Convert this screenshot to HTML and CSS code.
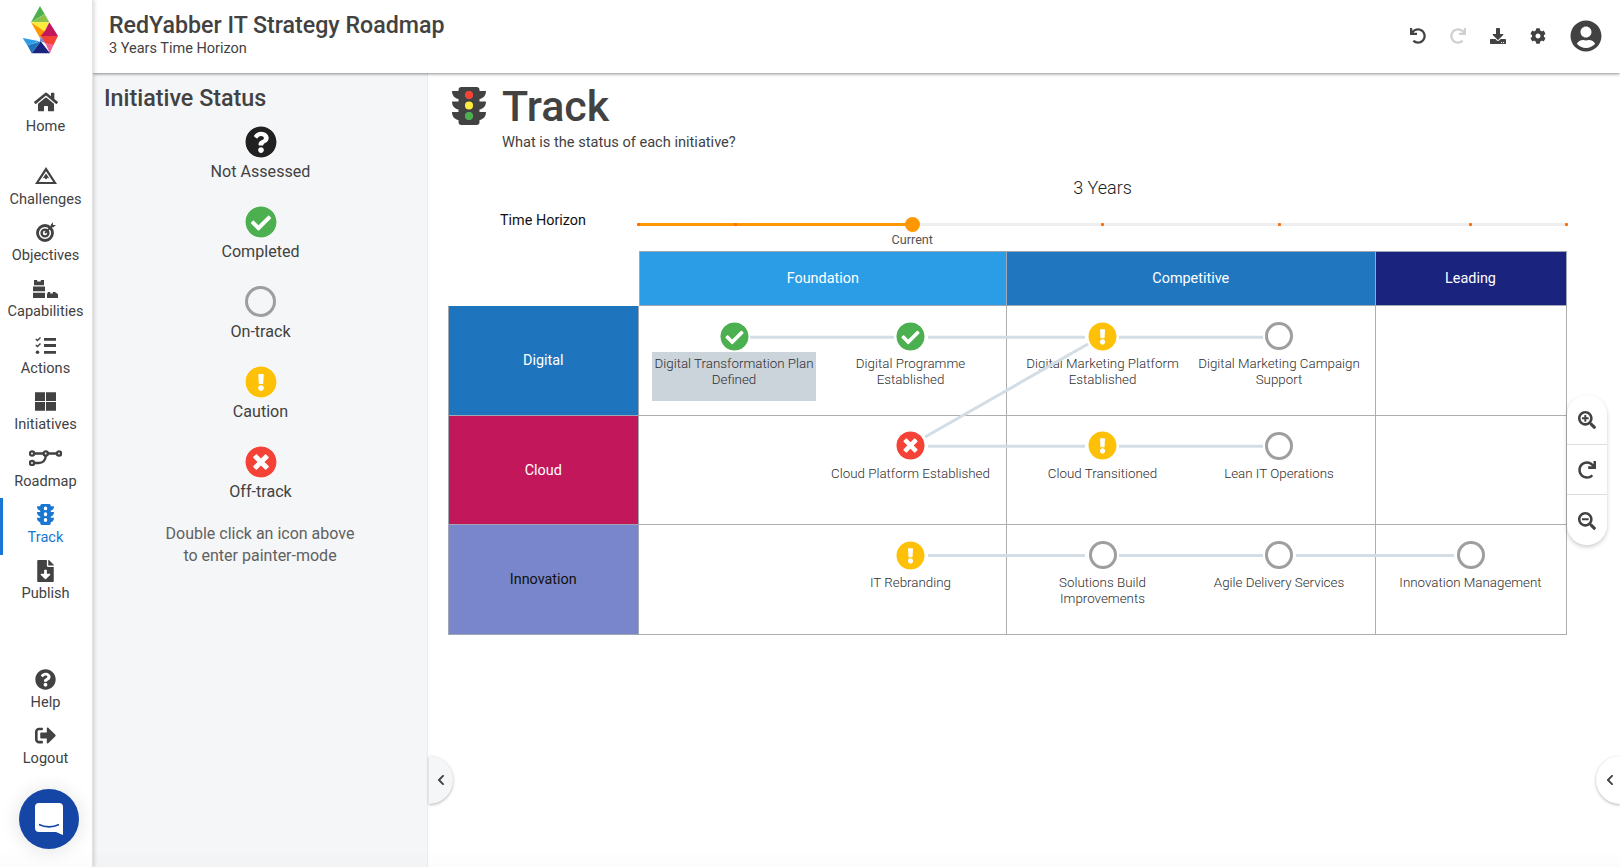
FILE: index.html
```html
<!DOCTYPE html>
<html lang="en">
<head>
  <meta charset="UTF-8">
  <title>RedYabber IT Strategy Roadmap - Track</title>
  <meta name="viewport" content="width=device-width, initial-scale=1.0">
  <link rel="stylesheet" href="styles.css">
</head>
<body>

<svg class="icon-defs" aria-hidden="true">
  <symbol id="i-home" viewBox="0 0 576 512"><path d="M280.37 148.26L96 300.11V464a16 16 0 0 0 16 16l112.06-.29a16 16 0 0 0 15.92-16V368a16 16 0 0 1 16-16h64a16 16 0 0 1 16 16v95.64a16 16 0 0 0 16 16.05L464 480a16 16 0 0 0 16-16V300L295.67 148.26a12.19 12.19 0 0 0-15.3 0zM571.6 251.47L488 182.56V44.05a12 12 0 0 0-12-12h-56a12 12 0 0 0-12 12v72.61L318.47 43a48 48 0 0 0-61 0L4.34 251.47a12 12 0 0 0-1.6 16.9l25.5 31A12 12 0 0 0 45.15 301l235.22-193.74a12.19 12.19 0 0 1 15.3 0L530.9 301a12 12 0 0 0 16.9-1.6l25.5-31a12 12 0 0 0-1.7-16.93z"/></symbol>
  <symbol id="i-mountain" viewBox="0 0 22 17"><path fill-rule="evenodd" d="M11 0L22 17H0zM11 4.200L3.800 15H18.200z"/><path d="M7.600 11.600L11 6.600l3.400 5-1.600-.9-1.800 1.700-1.800-1.700z"/></symbol>
  <symbol id="i-target" viewBox="0 0 20 20"><circle cx="9" cy="11" r="7.500" fill="none" stroke="currentColor" stroke-width="2.800"/><circle cx="9" cy="11" r="3.400" fill="none" stroke="currentColor" stroke-width="2.400"/><path d="M9 11L16.500 3.500" fill="none" stroke="currentColor" stroke-width="1.800"/><path d="M14.800 2.800L17 .3V3H20L17.400 5.200H14.800z"/></symbol>
  <symbol id="i-blocks" viewBox="0 0 25 18"><path d="M1 0h3.200v1.500h3.600V0H11v5.200H1zM0 6.600h12v4.700H0zM0 12.700h12V18H0zM15 12h2.200v1.500h2.600V12H22l3 2.200V18H14v-3.800z"/></symbol>
  <symbol id="i-tasks" viewBox="0 0 21 17"><path d="M9 1h12v2.800H9zM9 7.100h12v2.800H9zM9 14h12v2.800H9z"/><path d="M.3 2.400L1.300 1.500 2.500 2.600 5 0l1 1-3.500 3.600zM.3 8.400L1.300 7.500 2.500 8.600 5 6l1 1-3.500 3.600z"/><circle cx="2.500" cy="15.200" r="1.800"/></symbol>
  <symbol id="i-grid" viewBox="0 0 21 18.500"><path d="M0 0h10v8.800H0zM11 0h10v8.800H11zM0 9.800h10v8.700H0zM11 9.800h10v8.700H11z"/></symbol>
  <symbol id="i-route" viewBox="0 0 33 16"><g fill="none" stroke="currentColor" stroke-width="2.400"><circle cx="3" cy="3.500" r="2.100"/><circle cx="16.700" cy="3.500" r="2.100"/><circle cx="30" cy="3.500" r="2.100"/><circle cx="3" cy="13" r="2.100"/><path d="M5.200 3.500h9.300M18.900 3.500h8.900M16.700 5.700c0 5-3 7.300-7 7.300H5.200"/></g></symbol>
  <symbol id="i-light" viewBox="0 0 34 38" preserveAspectRatio="none"><path fill-rule="evenodd" d="M9.500 0h15a3 3 0 0 1 3 3v1h6.500c0 4.500-2.500 7.300-6.500 8v2.500h6.500c0 4.500-2.500 7.300-6.500 8V25h6.500c0 4.500-2.500 7.300-6.500 8v2a3 3 0 0 1-3 3h-15a3 3 0 0 1-3-3v-2C2.500 32.300 0 29.500 0 25h6.500v-2.500C2.500 21.800 0 19 0 14.500h6.500V12C2.500 11.300 0 8.500 0 4h6.500V3a3 3 0 0 1 3-3zM17 4.500a3.500 3.500 0 1 0 0 7 3.500 3.500 0 0 0 0-7zM17 15a3.500 3.500 0 1 0 0 7 3.500 3.500 0 0 0 0-7zM17 25.500a3.500 3.500 0 1 0 0 7 3.500 3.500 0 0 0 0-7z"/></symbol>
  <symbol id="i-publish" viewBox="0 0 384 512"><path d="M224 136V0H24C10.700 0 0 10.700 0 24v464c0 13.300 10.700 24 24 24h336c13.300 0 24-10.700 24-24V160H248c-13.200 0-24-10.800-24-24zm76.450 211.360l-96.420 95.700c-6.650 6.610-17.390 6.610-24.040 0l-96.420-95.700C73.420 337.290 80.540 320 94.820 320H160v-80c0-8.840 7.160-16 16-16h32c8.840 0 16 7.160 16 16v80h65.180c14.280 0 21.400 17.290 11.270 27.360zM377 105L279.100 7c-4.500-4.500-10.600-7-17-7H256v128h128v-6.100c0-6.300-2.500-12.400-7-16.900z"/></symbol>
  <symbol id="i-question" viewBox="0 0 512 512"><path d="M504 256c0 136.997-111.043 248-248 248S8 392.997 8 256C8 119.083 119.043 8 256 8s248 111.083 248 248zM262.655 90c-54.497 0-89.255 22.957-116.549 63.758-3.536 5.286-2.353 12.415 2.715 16.258l34.699 26.310c5.205 3.947 12.621 3.008 16.665-2.122 17.864-22.658 30.113-35.797 57.303-35.797 20.429 0 45.698 13.148 45.698 32.958 0 14.976-12.363 22.667-32.534 33.976C247.128 238.528 216 254.941 216 296v4c0 6.627 5.373 12 12 12h56c6.627 0 12-5.373 12-12v-1.333c0-28.462 83.186-29.647 83.186-106.667 0-58.002-60.165-102-116.531-102zM256 338c-25.365 0-46 20.635-46 46 0 25.364 20.635 46 46 46s46-20.636 46-46c0-25.365-20.635-46-46-46z"/></symbol>
  <symbol id="i-check" viewBox="0 0 512 512"><path d="M504 256c0 136.967-111.033 248-248 248S8 392.967 8 256 119.033 8 256 8s248 111.033 248 248zM227.314 387.314l184-184c6.248-6.248 6.248-16.379 0-22.627l-22.627-22.627c-6.248-6.249-16.379-6.249-22.628 0L216 308.118l-70.059-70.059c-6.248-6.248-16.379-6.248-22.628 0l-22.627 22.627c-6.248 6.248-6.248 16.379 0 22.627l104 104c6.249 6.249 16.379 6.249 22.628.001z"/></symbol>
  <symbol id="i-caution" viewBox="0 0 512 512"><path d="M504 256c0 136.997-111.043 248-248 248S8 392.997 8 256C8 119.083 119.043 8 256 8s248 111.083 248 248zm-248 50c-25.405 0-46 20.595-46 46s20.595 46 46 46 46-20.595 46-46-20.595-46-46-46zm-43.673-165.346l7.418 136c.347 6.364 5.609 11.346 11.982 11.346h48.546c6.373 0 11.635-4.982 11.982-11.346l7.418-136c.375-6.874-5.098-12.654-11.982-12.654h-63.383c-6.884 0-12.356 5.780-11.981 12.654z"/></symbol>
  <symbol id="i-cross" viewBox="0 0 512 512"><path d="M256 8C119 8 8 119 8 256s111 248 248 248 248-111 248-248S393 8 256 8zm121.600 313.100c4.700 4.700 4.700 12.300 0 17L338 377.600c-4.700 4.700-12.300 4.700-17 0L256 312l-65.100 65.600c-4.700 4.700-12.300 4.700-17 0L134.400 338c-4.700-4.700-4.700-12.300 0-17l65.600-65-65.600-65.100c-4.700-4.700-4.700-12.300 0-17l39.600-39.600c4.700-4.700 12.300-4.700 17 0l65 65.700 65.100-65.600c4.700-4.700 12.300-4.700 17 0l39.600 39.600c4.700 4.700 4.700 12.300 0 17L312 256l65.600 65.100z"/></symbol>
  <symbol id="i-logout" viewBox="0 0 512 512"><path d="M497 273L329 441c-15 15-41 4.500-41-17v-96H152c-13.300 0-24-10.700-24-24v-96c0-13.300 10.700-24 24-24h136V88c0-21.400 25.900-32 41-17l168 168c9.300 9.400 9.300 24.600 0 34zM192 436v-40c0-6.600-5.400-12-12-12H96c-17.700 0-32-14.300-32-32V160c0-17.700 14.300-32 32-32h84c6.600 0 12-5.400 12-12V76c0-6.600-5.400-12-12-12H96c-53 0-96 43-96 96v192c0 53 43 96 96 96h84c6.600 0 12-5.400 12-12z"/></symbol>
  <symbol id="i-undo" viewBox="0 0 512 512"><path d="M212.333 224.333H12c-6.627 0-12-5.373-12-12V12C0 5.373 5.373 0 12 0h48c6.627 0 12 5.373 12 12v78.112C117.773 39.279 184.260 7.470 258.175 8.007c136.906.994 246.448 111.623 246.157 248.532C504.041 393.258 393.120 504 256.333 504c-64.089 0-122.496-24.313-166.510-64.215-5.099-4.622-5.334-12.554-.467-17.420l33.967-33.967c4.474-4.474 11.662-4.717 16.401-.525C170.760 415.336 211.580 432 256.333 432c97.268 0 176-78.716 176-176 0-97.267-78.716-176-176-176-58.496 0-110.280 28.476-142.274 72.333h98.274c6.627 0 12 5.373 12 12v48c0 6.627-5.373 12-12 12z"/></symbol>
  <symbol id="i-download" viewBox="0 0 512 512"><path d="M216 0h80c13.300 0 24 10.700 24 24v168h87.700c17.800 0 26.700 21.500 14.100 34.100L269.700 378.300c-7.500 7.500-19.800 7.500-27.300 0L90.100 226.100c-12.600-12.600-3.700-34.100 14.100-34.100H192V24c0-13.300 10.700-24 24-24zm296 376v112c0 13.300-10.700 24-24 24H24c-13.300 0-24-10.700-24-24V376c0-13.300 10.700-24 24-24h146.700l49 49c20.100 20.100 52.500 20.100 72.600 0l49-49H488c13.300 0 24 10.700 24 24zm-124 88c0-11-9-20-20-20s-20 9-20 20 9 20 20 20 20-9 20-20zm64 0c0-11-9-20-20-20s-20 9-20 20 9 20 20 20 20-9 20-20z"/></symbol>
  <symbol id="i-cog" viewBox="0 0 512 512"><path d="M487.400 315.700l-42.600-24.600c4.300-23.200 4.300-47 0-70.200l42.600-24.600c4.900-2.800 7.100-8.600 5.500-14-11.100-35.600-30-67.800-54.700-94.600-3.800-4.100-10-5.100-14.800-2.300L380.800 110c-17.900-15.400-38.500-27.300-60.800-35.100V25.800c0-5.600-3.900-10.500-9.400-11.700-36.700-8.200-74.300-7.800-109.200 0-5.500 1.200-9.400 6.100-9.400 11.700V75c-22.200 7.900-42.800 19.800-60.800 35.100L88.700 85.500c-4.900-2.800-11-1.900-14.800 2.300-24.700 26.700-43.600 58.900-54.700 94.600-1.700 5.400.6 11.200 5.500 14L67.300 221c-4.300 23.200-4.300 47 0 70.200l-42.600 24.600c-4.900 2.800-7.100 8.600-5.500 14 11.100 35.600 30 67.800 54.700 94.600 3.800 4.100 10 5.100 14.800 2.300l42.600-24.600c17.900 15.400 38.500 27.300 60.800 35.100v49.200c0 5.600 3.900 10.500 9.400 11.700 36.700 8.200 74.300 7.800 109.200 0 5.500-1.200 9.400-6.100 9.400-11.700v-49.200c22.200-7.900 42.800-19.800 60.800-35.100l42.600 24.600c4.900 2.800 11 1.900 14.800-2.300 24.700-26.700 43.600-58.900 54.700-94.600 1.500-5.500-.7-11.300-5.600-14.100zM256 336c-44.100 0-80-35.900-80-80s35.900-80 80-80 80 35.900 80 80-35.900 80-80 80z"/></symbol>
  <symbol id="i-user" viewBox="0 0 496 512"><path d="M248 8C111 8 0 119 0 256s111 248 248 248 248-111 248-248S385 8 248 8zm0 96c48.600 0 88 39.400 88 88s-39.400 88-88 88-88-39.400-88-88 39.400-88 88-88zm0 344c-58.700 0-111.300-26.600-146.500-68.200 18.800-35.400 55.600-59.800 98.500-59.800 2.400 0 4.800.4 7.100 1.100 13 4.200 26.600 6.900 40.900 6.900 14.300 0 28-2.700 40.900-6.900 2.300-.7 4.700-1.100 7.100-1.100 42.900 0 79.700 24.400 98.500 59.800C359.300 421.400 306.700 448 248 448z"/></symbol>
  <symbol id="i-zoom-in" viewBox="0 0 512 512"><path d="M304 192v32c0 6.600-5.400 12-12 12h-56v56c0 6.600-5.400 12-12 12h-32c-6.600 0-12-5.400-12-12v-56h-56c-6.600 0-12-5.400-12-12v-32c0-6.600 5.400-12 12-12h56v-56c0-6.600 5.400-12 12-12h32c6.600 0 12 5.400 12 12v56h56c6.600 0 12 5.400 12 12zm201 284.700L476.700 505c-9.400 9.400-24.600 9.400-33.900 0L343 405.300c-4.500-4.500-7-10.600-7-17V372c-35.300 27.600-79.700 44-128 44C93.100 416 0 322.900 0 208S93.100 0 208 0s208 93.100 208 208c0 48.300-16.400 92.700-44 128h16.300c6.400 0 12.500 2.500 17 7l99.700 99.700c9.300 9.400 9.300 24.600 0 34zM344 208c0-75.200-60.800-136-136-136S72 132.800 72 208s60.800 136 136 136 136-60.800 136-136z"/></symbol>
  <symbol id="i-zoom-out" viewBox="0 0 512 512"><path d="M304 192v32c0 6.600-5.400 12-12 12H124c-6.600 0-12-5.400-12-12v-32c0-6.600 5.400-12 12-12h168c6.600 0 12 5.400 12 12zm201 284.700L476.700 505c-9.400 9.400-24.600 9.400-33.900 0L343 405.300c-4.500-4.500-7-10.600-7-17V372c-35.300 27.600-79.700 44-128 44C93.100 416 0 322.900 0 208S93.100 0 208 0s208 93.100 208 208c0 48.300-16.400 92.700-44 128h16.300c6.400 0 12.500 2.500 17 7l99.700 99.700c9.300 9.400 9.300 24.600 0 34zM344 208c0-75.200-60.800-136-136-136S72 132.800 72 208s60.800 136 136 136 136-60.800 136-136z"/></symbol>
  <symbol id="i-chevron" viewBox="0 0 320 512"><path d="M34.520 239.030L228.870 44.690c9.370-9.370 24.570-9.370 33.940 0l22.670 22.670c9.360 9.360 9.370 24.520.04 33.900L131.490 256l154.020 154.750c9.340 9.380 9.320 24.540-.04 33.900l-22.670 22.670c-9.370 9.370-24.570 9.370-33.940 0L34.520 272.970c-9.370-9.370-9.370-24.570 0-33.940z"/></symbol>
</svg>

<aside class="sidebar">
  <div class="logo">
    <svg width="40" height="54" viewBox="60 10 120 160">
      <polygon fill="#4caf50" points="120,18 93,67 134,42"/>
      <polygon fill="#8bc34a" points="134,42 148,67 93,67"/>
      <polygon fill="#ff9800" points="93,67 136,92 120,115"/>
      <polygon fill="#ffeb3b" points="93,67 148,67 133,94"/>
      <polygon fill="#c2185b" points="148,67 174,108 122,108 135,92"/>
      <polygon fill="#f44336" points="122,108 174,108 160,136 135,130"/>
      <polygon fill="#f06292" points="135,128 160,136 150,160"/>
      <polygon fill="#7986cb" points="122,108 135,128 120,124"/>
      <polygon fill="#1a237e" points="122,124 150,160 95,160"/>
      <polygon fill="#1f75bd" points="122,124 95,160 82,136"/>
      <polygon fill="#2b9ce6" points="68,114 118,124 82,136"/>
    </svg>
  </div>
  <nav class="nav">
    <a class="nav-item nav-home"><span class="nav-icon"><svg width="24" height="22"><use href="#i-home"/></svg></span>Home</a>
    <a class="nav-item"><span class="nav-icon"><svg width="22" height="17"><use href="#i-mountain"/></svg></span>Challenges</a>
    <a class="nav-item"><span class="nav-icon"><svg width="20" height="20"><use href="#i-target"/></svg></span>Objectives</a>
    <a class="nav-item"><span class="nav-icon"><svg width="25" height="18"><use href="#i-blocks"/></svg></span>Capabilities</a>
    <a class="nav-item"><span class="nav-icon"><svg width="21" height="17"><use href="#i-tasks"/></svg></span>Actions</a>
    <a class="nav-item"><span class="nav-icon"><svg width="21" height="19"><use href="#i-grid"/></svg></span>Initiatives</a>
    <a class="nav-item"><span class="nav-icon"><svg width="33" height="16"><use href="#i-route"/></svg></span>Roadmap</a>
    <a class="nav-item active"><span class="nav-icon"><svg width="17" height="21"><use href="#i-light"/></svg></span>Track</a>
    <a class="nav-item"><span class="nav-icon"><svg width="17" height="22"><use href="#i-publish"/></svg></span>Publish</a>
  </nav>
  <nav class="nav nav-bottom">
    <a class="nav-item"><span class="nav-icon"><svg width="21" height="21"><use href="#i-question"/></svg></span>Help</a>
    <a class="nav-item"><span class="nav-icon"><svg width="21" height="21"><use href="#i-logout"/></svg></span>Logout</a>
  </nav>
</aside>

<div class="content">
  <header class="topbar">
    <div>
      <h1 class="plan-title">RedYabber IT Strategy Roadmap</h1>
      <div class="plan-sub">3 Years Time Horizon</div>
    </div>
    <div class="tools">
      <svg class="tool" width="16" height="16"><use href="#i-undo"/></svg>
      <svg class="tool tool-redo" width="16" height="16"><use href="#i-undo"/></svg>
      <svg class="tool" width="16" height="16"><use href="#i-download"/></svg>
      <svg class="tool" width="16" height="16"><use href="#i-cog"/></svg>
      <svg class="avatar" width="32" height="32"><use href="#i-user"/></svg>
    </div>
  </header>

  <div class="workspace">
    <section class="panel">
      <h2 class="panel-title">Initiative Status</h2>
      <div class="status-list">
        <div class="status"><svg class="status-icon dark" width="32" height="32"><use href="#i-question"/></svg>Not Assessed</div>
        <div class="status"><svg class="status-icon green" width="32" height="32"><use href="#i-check"/></svg>Completed</div>
        <div class="status"><span class="ring ring-big"></span>On-track</div>
        <div class="status"><svg class="status-icon amber" width="32" height="32"><use href="#i-caution"/></svg>Caution</div>
        <div class="status"><svg class="status-icon red" width="32" height="32"><use href="#i-cross"/></svg>Off-track</div>
      </div>
      <p class="panel-help">Double click an icon above<br>to enter painter-mode</p>
    </section>

    <main class="main">
      <div class="page-head">
        <svg class="page-icon" width="34" height="38" viewBox="0 0 34 38">
          <use href="#i-light"/>
          <circle cx="17" cy="8" r="4" fill="#f44336"/>
          <circle cx="17" cy="18.500" r="4" fill="#ffeb3b"/>
          <circle cx="17" cy="29" r="4" fill="#4caf50"/>
        </svg>
        <div>
          <h1 class="page-title">Track</h1>
          <p class="page-sub">What is the status of each initiative?</p>
        </div>
      </div>

      <div class="horizon-title">3 Years</div>
      <div class="horizon">
        <div class="horizon-label">Time Horizon</div>
        <div class="slider">
          <div class="slider-fill"></div>
          <i class="tick" style="left: 0"></i>
          <i class="tick" style="left: 10.4%"></i>
          <i class="tick" style="left: 50%"></i>
          <i class="tick" style="left: 69.1%"></i>
          <i class="tick" style="left: 89.7%"></i>
          <i class="tick" style="left: 100%"></i>
          <div class="thumb"><span>Current</span></div>
        </div>
      </div>

      <div class="board">
        <div class="corner"></div>
        <div class="col-head foundation">Foundation</div>
        <div class="col-head competitive">Competitive</div>
        <div class="col-head leading">Leading</div>

        <div class="row-head digital">Digital</div>
        <div class="cell">
          <div class="node selected"><svg class="node-icon green" width="29" height="29"><use href="#i-check"/></svg><div class="node-label">Digital Transformation Plan Defined</div></div>
          <div class="node"><svg class="node-icon green" width="29" height="29"><use href="#i-check"/></svg><div class="node-label">Digital Programme Established</div></div>
        </div>
        <div class="cell">
          <div class="node"><svg class="node-icon amber" width="29" height="29"><use href="#i-caution"/></svg><div class="node-label">Digital Marketing Platform Established</div></div>
          <div class="node"><span class="ring"></span><div class="node-label">Digital Marketing Campaign Support</div></div>
        </div>
        <div class="cell"></div>

        <div class="row-head cloud">Cloud</div>
        <div class="cell">
          <div class="node"></div>
          <div class="node"><svg class="node-icon red" width="29" height="29"><use href="#i-cross"/></svg><div class="node-label">Cloud Platform Established</div></div>
        </div>
        <div class="cell">
          <div class="node"><svg class="node-icon amber" width="29" height="29"><use href="#i-caution"/></svg><div class="node-label">Cloud Transitioned</div></div>
          <div class="node"><span class="ring"></span><div class="node-label">Lean IT Operations</div></div>
        </div>
        <div class="cell"></div>

        <div class="row-head innovation">Innovation</div>
        <div class="cell">
          <div class="node"></div>
          <div class="node"><svg class="node-icon amber" width="29" height="29"><use href="#i-caution"/></svg><div class="node-label">IT Rebranding</div></div>
        </div>
        <div class="cell">
          <div class="node"><span class="ring"></span><div class="node-label">Solutions Build Improvements</div></div>
          <div class="node"><span class="ring"></span><div class="node-label">Agile Delivery Services</div></div>
        </div>
        <div class="cell">
          <div class="node"><span class="ring"></span><div class="node-label">Innovation Management</div></div>
        </div>

        <!-- connectors, in board coordinates -->
        <svg class="links" width="1118" height="384">
          <path d="M302 86.300H446M480 86.300H637M671 86.300H815"/>
          <path d="M477 186L640 93"/>
          <path d="M480 195.300H637M671 195.300H815"/>
          <path d="M480 304.500H637M671 304.500H815M848 304.500H1006"/>
        </svg>
      </div>

      <div class="zoom-bar">
        <div class="zoom-btn"><svg width="18" height="18"><use href="#i-zoom-in"/></svg></div>
        <div class="zoom-btn"><svg class="flip" width="18" height="18"><use href="#i-undo"/></svg></div>
        <div class="zoom-btn"><svg width="18" height="18"><use href="#i-zoom-out"/></svg></div>
      </div>

      <div class="tab tab-left"><svg width="8" height="12"><use href="#i-chevron"/></svg></div>
      <div class="tab tab-right"><svg width="8" height="12"><use href="#i-chevron"/></svg></div>
    </main>
  </div>
</div>

<div class="chat">
  <svg width="28" height="32" viewBox="0 0 28 32">
    <path fill="#fff" d="M4 0h20a4 4 0 0 1 4 4v28l-7-3H4a4 4 0 0 1-4-4V4a4 4 0 0 1 4-4z"/>
    <path fill="none" stroke="#1546a6" stroke-width="1.600" d="M4 21.500c6 3.200 14 3.200 20 0"/>
  </svg>
</div>
<div class="page-fade"></div>

</body>
</html>
```

FILE: styles.css
```css
:root {
  --ink: #424242;
  --blue: #1976d2;
  --panel-bg: #f5f6f8;
  --grid-line: #aeaeae;
}

* {
  box-sizing: border-box;
}

html, body {
  height: 100%;
}

body {
  margin: 0;
  display: flex;
  overflow: hidden;
  background: #fff;
  color: var(--ink);
  font-family: Roboto, 'Liberation Sans', sans-serif;
  font-size: 14px;
}

h1, h2, p {
  margin: 0;
}

.icon-defs {
  position: absolute;
  width: 0;
  height: 0;
}

svg {
  fill: currentColor;
  display: block;
}

/* left nav */
.sidebar {
  flex: 0 0 93px;
  width: 93px;
  border-right: 1px solid #e4e4e4;
  box-shadow: 1px 0 4px rgba(0,0,0,0.18);
  background: #fff;
  position: relative;
  z-index: 3;
}

.logo {
  height: 86px;
  padding: 3px 0 0 20px;
}

.nav-item {
  display: block;
  height: 56.4px;
  padding-top: 4px;
  border-left: 3px solid transparent;
  padding-right: 4px;
  text-align: center;
  font-size: 14.6px;
  line-height: 20px;
}

.nav-item.active {
  border-left-color: var(--blue);
  color: var(--blue);
}

.nav-home {
  margin-bottom: 17.6px;
}

.nav-home .nav-icon {
  margin-bottom: 1.5px;
}

.nav-icon {
  height: 24px;
  margin-bottom: 0.7px;
  display: flex;
  align-items: center;
  justify-content: center;
}

.nav-bottom {
  margin-top: 52px;
}

/* top bar */
.content {
  flex: 1;
  min-width: 0;
  display: flex;
  flex-direction: column;
}

.topbar {
  height: 73px;
  flex: none;
  padding: 13px 0 0 16px;
  display: flex;
  justify-content: space-between;
  background: #fff;
  box-shadow: 0 1px 3px rgba(0,0,0,0.45);
  position: relative;
  z-index: 2;
}

.plan-title {
  font-size: 23.2px;
  font-weight: 500;
  line-height: 25px;
}

.plan-sub {
  margin-top: 1px;
  font-size: 14.5px;
  line-height: 20px;
}

.tools {
  display: flex;
  align-items: center;
  height: 46px;
  padding-right: 18px;
}

.tool {
  margin-right: 24px;
}

.tool-redo {
  color: #d0d0d0;
  transform: scaleX(-1);
}

/* status panel */
.workspace {
  flex: 1;
  display: flex;
  min-height: 0;
}

.panel {
  width: 335px;
  flex: none;
  background: var(--panel-bg);
  border-right: 1px solid #ececec;
  padding-top: 11px;
}

.panel-title {
  font-size: 23.3px;
  font-weight: 500;
  line-height: 28px;
  padding-left: 11px;
  margin-bottom: 14px;
}

.status {
  height: 80px;
  display: flex;
  flex-direction: column;
  align-items: center;
  padding-left: 1px;
  font-size: 16.1px;
  line-height: 20px;
}

.status-icon {
  margin-bottom: 4px;
  background: #fff;
  border-radius: 50%;
}

.dark {
  color: #212121;
}

.green {
  color: #4caf50;
}

.amber {
  color: #ffc107;
}

.red {
  color: #f44336;
}

.ring {
  display: block;
  width: 28px;
  height: 28px;
  border: 3px solid #9e9e9e;
  border-radius: 50%;
  background: #fff;
  flex: none;
}

.ring-big {
  width: 31px;
  height: 31px;
  margin-bottom: 5px;
  background: transparent;
}

.panel-help {
  margin-top: -3px;
  text-align: center;
  font-size: 16px;
  line-height: 22px;
  color: #616161;
}

/* main area */
.main {
  flex: 1;
  position: relative;
  padding-left: 20px;
}

.page-head {
  display: flex;
  padding: 14px 0 0 4px;
}

.page-icon {
  margin-right: 16px;
  flex: none;
}

.page-title {
  font-size: 43px;
  font-weight: 500;
  line-height: 39px;
}

.page-sub {
  margin-top: 6px;
  font-size: 14.6px;
  line-height: 20px;
}

.horizon-title {
  margin: 24px 0 0 190.5px;
  width: 928px;
  text-align: center;
  font-size: 18px;
  font-weight: 300;
  line-height: 24px;
  color: #212121;
}

.horizon {
  display: flex;
  align-items: center;
  height: 18px;
  margin-top: 12px;
}

.horizon-label {
  width: 190.5px;
  padding-left: 52px;
  font-size: 14.4px;
  color: #111;
  line-height: 18px;
}

.slider {
  width: 928px;
  height: 3px;
  margin-top: 6px;
  background: #eee;
  position: relative;
}

.slider-fill {
  width: 29.5%;
  height: 100%;
  background: #ff9800;
}

.tick {
  position: absolute;
  top: 0;
  width: 3px;
  height: 3.5px;
  margin-left: -1.5px;
  background: #ff6d00;
  border-radius: 1px;
}

.thumb {
  position: absolute;
  left: 29.5%;
  top: -6px;
  width: 15px;
  height: 15px;
  margin-left: -7.5px;
  border-radius: 50%;
  background: #ff9800;
}

.thumb span {
  position: absolute;
  top: 15px;
  left: 50%;
  transform: translateX(-50%);
  font-size: 12.6px;
  line-height: 16px;
  color: #555;
}

/* the roadmap table */
.board {
  position: relative;
  margin-top: 21px;
  display: grid;
  grid-template-columns: 190.5px 368.5px 368.5px 191px;
  grid-template-rows: 55px repeat(3, 109.7px);
  width: 1118.5px;
}

.col-head, .row-head {
  display: flex;
  align-items: center;
  justify-content: center;
  color: #fff;
  font-size: 14.4px;
  border: 1px solid #9ea7b3;
  border-width: 1px 1px 1px 0;
}

.row-head {
  border-width: 0 1px 1px 1px;
}

.foundation {
  background: #2b9ce6;
  border-left-width: 1px;
}

.competitive {
  background: #2177bf;
}

.leading {
  background: #1a237e;
}

.digital {
  background: #1f75bd;
}

.cloud {
  background: #c2185b;
}

.innovation {
  background: #7986cb;
  color: #111;
}

.cell {
  display: flex;
  justify-content: center;
  gap: 12.5px;
  padding-top: 16px;
  border-right: 1px solid var(--grid-line);
  border-bottom: 1px solid var(--grid-line);
}

.node {
  width: 164px;
  display: flex;
  flex-direction: column;
  align-items: center;
}

.node-icon {
  margin: -0.5px 0 1.5px;
  background: #fff;
  border-radius: 50%;
}

.node .ring {
  margin-bottom: 2px;
}

.node-label {
  width: 164px;
  min-height: 49px;
  padding: 4px 1px 0;
  font-size: 13.35px;
  font-weight: 300;
  line-height: 15.5px;
  text-align: center;
  color: #2e2e2e;
}

.selected .node-label {
  background: #cbd3db;
}

.links {
  position: absolute;
  left: 0;
  top: 0;
  fill: none;
  stroke: #d3dde6;
  stroke-width: 3;
  pointer-events: none;
}

/* floating controls */
.zoom-bar {
  position: absolute;
  left: 1139px;
  top: 322px;
  width: 40px;
  background: #fff;
  border-radius: 20px;
  box-shadow: 0 2px 4px rgba(0,0,0,0.2);
}

.zoom-btn {
  height: 50px;
  padding-top: 1px;
  display: flex;
  align-items: center;
  justify-content: center;
  border-bottom: 1px solid #ddd;
}

.zoom-btn:last-child {
  border-bottom: none;
}

.flip {
  transform: scaleX(-1);
}

.tab {
  position: absolute;
  top: 683px;
  width: 24px;
  height: 48px;
  display: flex;
  align-items: center;
  box-shadow: 0 1px 3px rgba(0,0,0,0.3);
}

.tab-left {
  left: 1px;
  padding-left: 8px;
  background: var(--panel-bg);
  border-radius: 0 24px 24px 0;
}

.tab-right {
  right: 0;
  padding-left: 10px;
  background: #fff;
  border-radius: 24px 0 0 24px;
}

/* chat bubble */
.chat {
  position: fixed;
  left: 19px;
  bottom: 18px;
  width: 60px;
  height: 60px;
  border-radius: 50%;
  background: #1546a6;
  box-shadow: 0 1px 20px rgba(0,0,0,0.12);
  display: flex;
  align-items: center;
  justify-content: center;
  z-index: 4;
}

.page-fade {
  position: fixed;
  left: 0;
  right: 0;
  bottom: 0;
  height: 18px;
  background: linear-gradient(rgba(0,0,0,0), rgba(0,0,0,0.012));
  pointer-events: none;
  z-index: 5;
}
```
